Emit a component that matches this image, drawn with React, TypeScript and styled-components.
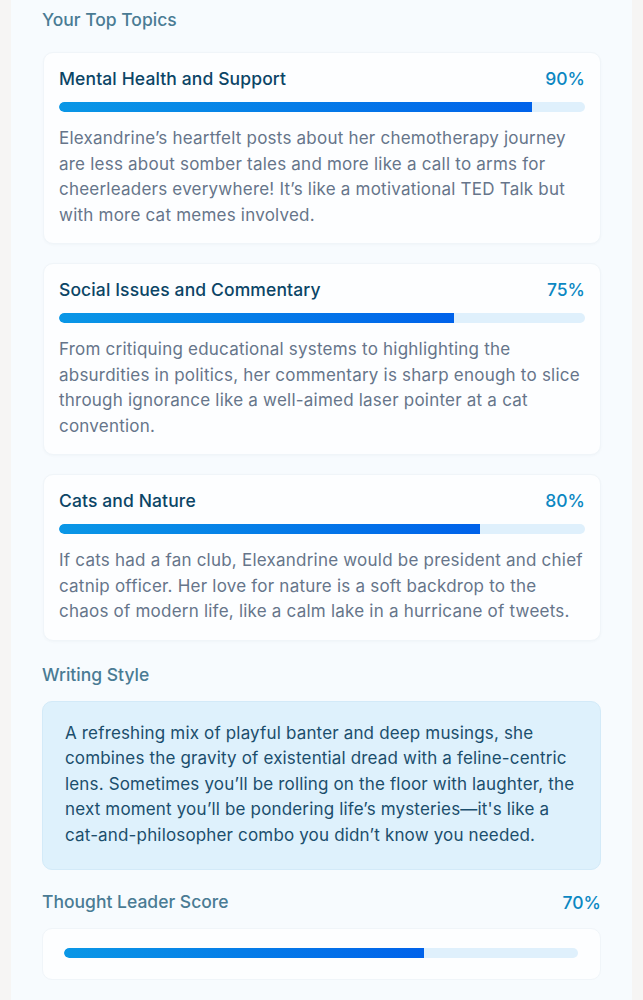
import React from "react";
import styled, { createGlobalStyle } from "styled-components";

const Global = createGlobalStyle`
  html, body { margin: 0; padding: 0; background: #f6f5f4; }
  body { font-family: Inter, "Noto Sans", sans-serif; -webkit-font-smoothing: antialiased; }
  * { box-sizing: border-box; }
`;

const Page = styled.div`
  padding: 0 11px;
  min-height: 1000px;
`;

const Panel = styled.main`
  background: #f7fbfe;
  padding: 6px 31px 20px 31px;
  display: flex;
  flex-direction: column;
  min-height: 1000px;
`;

const SectionTitle = styled.h2`
  margin: 0;
  font-size: 17.5px;
  font-weight: 500;
  line-height: 28px;
  color: #4a7b94;
`;

const SectionHead = styled.div<{ $mt?: number }>`
  display: flex;
  justify-content: space-between;
  align-items: center;
  margin-top: ${(p) => p.$mt ?? 0}px;
`;

const Percent = styled.span`
  font-size: 17.5px;
  font-weight: 500;
  color: #0b87c2;
`;

const TopicList = styled.div`
  display: flex;
  flex-direction: column;
  gap: 19px;
  margin-top: 18px;
`;

const Card = styled.section`
  background: #fdfeff;
  border: 1px solid #f0f5f9;
  border-radius: 10px;
  box-shadow: 0 1px 3px rgba(14, 60, 100, 0.03);
  padding: 14px 15px 15px 15px;
  margin-left: 1px;
`;

const CardHead = styled.div`
  display: flex;
  justify-content: space-between;
  align-items: center;
  line-height: 24px;
`;

const TopicName = styled.h3`
  margin: 0;
  font-size: 17.5px;
  font-weight: 500;
  letter-spacing: 0.12px;
  color: #0b4566;
`;

const Track = styled.div<{ $mt?: number }>`
  height: 10px;
  border-radius: 5px;
  background: #dff0fc;
  overflow: hidden;
  margin-top: ${(p) => p.$mt ?? 0}px;
`;

const Fill = styled.div`
  height: 100%;
  border-radius: 5px 0 0 5px;
  background: linear-gradient(90deg, #0a97e6 0%, #0062ea 100%);
`;

const Body = styled.p`
  margin: 14px 0 0 0;
  font-size: 17px;
  line-height: 25.5px;
  letter-spacing: 0.22px;
  color: #66758a;
`;

const StyleBox = styled.div`
  margin-top: 12px;
  background: #def1fc;
  border: 1px solid #d3eaf8;
  border-radius: 10px;
  padding: 19px 18px 21px 22px;
  font-size: 17px;
  line-height: 25.5px;
  letter-spacing: 0.16px;
  color: #1b4e6c;
`;

const ScoreCard = styled.div`
  margin-top: 12px;
  background: #fdfeff;
  border: 1px solid #f0f5f9;
  border-radius: 10px;
  padding: 19px 22px 21px 21px;
`;

const topics = [
  {
    name: "Mental Health and Support",
    pct: 90,
    text: "Elexandrine’s heartfelt posts about her chemotherapy journey are less about somber tales and more like a call to arms for cheerleaders everywhere! It’s like a motivational TED Talk but with more cat memes involved.",
  },
  {
    name: "Social Issues and Commentary",
    pct: 75,
    text: "From critiquing educational systems to highlighting the absurdities in politics, her commentary is sharp enough to slice through ignorance like a well-aimed laser pointer at a cat convention.",
  },
  {
    name: "Cats and Nature",
    pct: 80,
    text: "If cats had a fan club, Elexandrine would be president and chief catnip officer. Her love for nature is a soft backdrop to the chaos of modern life, like a calm lake in a hurricane of tweets.",
  },
];

function Bar({ pct, mt }: { pct: number; mt?: number }) {
  return (
    <Track $mt={mt}>
      <Fill style={{ width: `${pct}%` }} />
    </Track>
  );
}

export default function App() {
  return (
    <>
      <Global />
      <Page>
        <Panel>
          <SectionTitle>Your Top Topics</SectionTitle>
          <TopicList>
            {topics.map((t) => (
              <Card key={t.name}>
                <CardHead>
                  <TopicName>{t.name}</TopicName>
                  <Percent>{t.pct}%</Percent>
                </CardHead>
                <Bar pct={t.pct} mt={11} />
                <Body>{t.text}</Body>
              </Card>
            ))}
          </TopicList>
          <SectionHead $mt={20}>
            <SectionTitle>Writing Style</SectionTitle>
          </SectionHead>
          <StyleBox>
            A refreshing mix of playful banter and deep musings, she combines the gravity of existential dread with a feline-centric lens. Sometimes you’ll be rolling on the floor with laughter, the next moment you’ll be pondering life’s mysteries—it's like a cat-and-philosopher combo you didn’t know you needed.
          </StyleBox>
          <SectionHead $mt={18}>
            <SectionTitle>Thought Leader Score</SectionTitle>
            <Percent>70%</Percent>
          </SectionHead>
          <ScoreCard>
            <Bar pct={70} />
          </ScoreCard>
        </Panel>
      </Page>
    </>
  );
}
